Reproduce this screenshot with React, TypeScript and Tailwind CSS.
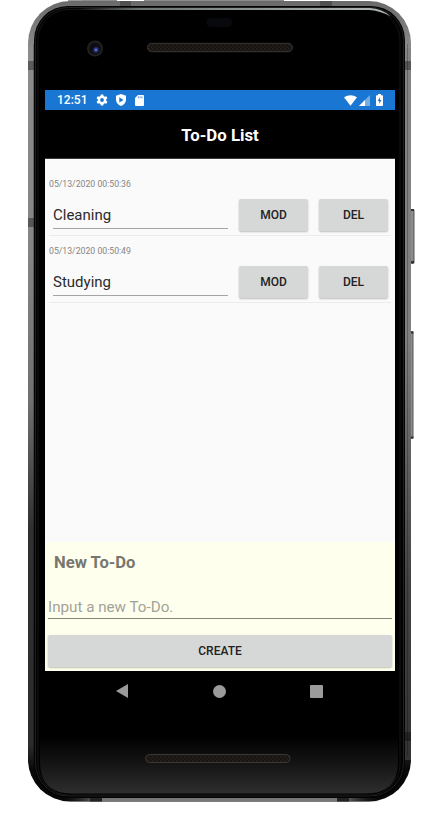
import React from "react";

const todos = [
  { date: "05/13/2020 00:50:36", text: "Cleaning" },
  { date: "05/13/2020 00:50:49", text: "Studying" },
];

/* The handset itself: metal rim, glass, camera, speakers and side keys. */
function Handset() {
  return (
    <svg className="absolute inset-0" width="443" height="820" viewBox="0 0 443 820">
      <defs>
        <linearGradient id="rim" x1="0" y1="0" x2="0" y2="1">
          <stop offset="0" stopColor="#6a6a6a" />
          <stop offset="0.06" stopColor="#8c8c8c" />
          <stop offset="0.3" stopColor="#858585" />
          <stop offset="0.5" stopColor="#707070" />
          <stop offset="0.66" stopColor="#303030" />
          <stop offset="0.93" stopColor="#2c2c2c" />
          <stop offset="0.96" stopColor="#080808" />
        </linearGradient>
        <linearGradient id="rimRight" x1="0" y1="0" x2="0" y2="1">
          <stop offset="0" stopColor="#858585" />
          <stop offset="0.4" stopColor="#808080" />
          <stop offset="0.75" stopColor="#444" />
          <stop offset="1" stopColor="#333" />
        </linearGradient>
        <linearGradient id="foot" x1="0" y1="0" x2="0" y2="1">
          <stop offset="0" stopColor="#000" />
          <stop offset="0.5" stopColor="#151515" />
          <stop offset="1" stopColor="#2e2e2e" />
        </linearGradient>
        <linearGradient id="edge" x1="0" y1="0" x2="1" y2="0">
          <stop offset="0" stopColor="#111" stopOpacity="0" />
          <stop offset="0.12" stopColor="#777" />
          <stop offset="0.88" stopColor="#777" />
          <stop offset="1" stopColor="#111" stopOpacity="0" />
        </linearGradient>
        <linearGradient id="gleam" x1="0" y1="0" x2="1" y2="0">
          <stop offset="0" stopColor="#7d8682" stopOpacity="0" />
          <stop offset="0.2" stopColor="#6f7774" />
          <stop offset="1" stopColor="#b5bab8" />
        </linearGradient>
        <radialGradient id="lens" cx="0.58" cy="0.6" r="0.5">
          <stop offset="0" stopColor="#a9b8ff" />
          <stop offset="0.25" stopColor="#35459c" />
          <stop offset="0.7" stopColor="#131a3a" />
          <stop offset="1" stopColor="#07080c" />
        </radialGradient>
        <pattern id="mesh" width="4" height="4" patternUnits="userSpaceOnUse">
          <rect width="4" height="4" fill="#171411" />
          <circle cx="1" cy="1" r="0.9" fill="#28231f" />
          <circle cx="3" cy="3" r="0.9" fill="#24201c" />
        </pattern>
      </defs>

      <rect x="410.500" y="209.500" width="3.500" height="54" rx="1" fill="#8c8c8c" stroke="#555" />
      <path d="M411 210h3M411 262h3" stroke="#333" strokeWidth="2" />
      <rect x="410.500" y="331.500" width="2.500" height="107" rx="1" fill="#8c8c8c" stroke="#555" />
      <path d="M411 332.500h2.500M411 437.500h2.500" stroke="#333" strokeWidth="2" />

      <rect x="28" y="1" width="383" height="800.500" rx="42" fill="url(#rim)" />
      <rect x="68" y="0" width="14" height="1" fill="#999" />
      <path d="M82 0.500h35M144 0.500h140" stroke="#8a8a8a" />
      <path d="M405 48h6V760h-6z" fill="url(#rimRight)" />
      <path d="M33.500 44V756M407.500 44V756" stroke="#000" strokeOpacity="0.250" />
      <path d="M28 61h6v9h-6zM405 61h6v9h-6zM28 218h6v9h-6zM405 732h6v9h-6z" fill="#000" fillOpacity="0.350" />
      <path d="M120 1h11v5h-11zM320 1h12v5h-12z" fill="#000" fillOpacity="0.250" />
      <rect x="60" y="798" width="321" height="3.500" fill="url(#edge)" />
      <path d="M90 798h12v3.500H90zM337 798h12v3.500h-12z" fill="#222" />

      <rect x="34" y="6" width="371" height="792" rx="34" fill="#030303" />
      <rect x="35.500" y="7.500" width="368" height="788.500" rx="33" fill="none" stroke="#1f1f1f" />
      <rect x="38" y="9.500" width="362" height="785.500" rx="31" fill="#000" stroke="#151515" />
      <path d="M40 736H398V762Q398 793.500 366 793.500H72Q40 793.500 40 762z" fill="url(#foot)" />
      <path d="M78 8H370Q382 8.500 391 16.500Q380 10.500 369 10H78z" fill="url(#gleam)" />

      <circle cx="95" cy="48.500" r="8" fill="#222224" />
      <circle cx="95" cy="48.500" r="6.200" fill="#111114" />
      <circle cx="95.300" cy="49" r="4.300" fill="url(#lens)" />
      <rect x="206.500" y="18" width="25.500" height="9" rx="4.500" fill="#08090d" />
      <rect x="147.500" y="43.300" width="145" height="8.400" rx="4.200" fill="url(#mesh)" stroke="#3a3633" />
      <rect x="145.500" y="754.500" width="144.500" height="8" rx="4" fill="url(#mesh)" stroke="#3a3830" />
    </svg>
  );
}

function StatusBar() {
  return (
    <div className="flex h-5 items-center bg-[#1976d2] px-3 text-white">
      <span className="w-[39px] text-[12px] font-medium leading-5">12:51</span>
      <svg width="12" height="12" viewBox="0 0 12 12">
        <g fill="white">
          <circle cx="6" cy="6" r="4.200" />
          <path d="M4.800.400h2.400l.5 2.400H4.300zM4.800 11.600h2.400l.5-2.400H4.300z" />
          <path d="M4.800.400h2.400l.5 2.400H4.300zM4.800 11.600h2.400l.5-2.400H4.300z" transform="rotate(60 6 6)" />
          <path d="M4.800.400h2.400l.5 2.400H4.300zM4.800 11.600h2.400l.5-2.400H4.300z" transform="rotate(120 6 6)" />
        </g>
        <circle cx="6" cy="6" r="1.900" fill="#1976d2" />
      </svg>
      <svg width="10" height="12" viewBox="0 0 10 12" className="ml-2">
        <path d="M5 0 10 1.700V5.500C10 8.500 8 11 5 12 2 11 0 8.500 0 5.500V1.700z" fill="white" />
        <path d="M3.300 3.300 7.500 5.900 3.300 8.500z" fill="#1976d2" />
      </svg>
      <svg width="9" height="11" viewBox="0 0 9 11" className="ml-[9px]">
        <path d="M3 0H8a1 1 0 0 1 1 1V10a1 1 0 0 1-1 1H1a1 1 0 0 1-1-1V3z" fill="white" />
        <path d="M3.300 1.300v2M5.100 1.300v2M6.900 1.300v2" stroke="#1976d2" strokeWidth="0.700" />
      </svg>
      <svg width="13" height="11" viewBox="0 0 13 11" className="ml-auto">
        <path d="M0 2.300Q6.500-1.800 13 2.300L6.500 10.700z" fill="white" />
      </svg>
      <svg width="11" height="11" viewBox="0 0 11 11" className="ml-0.5">
        <path d="M0 11 11 0V11z" fill="#75aee4" />
        <path d="M0 11 6 5V11z" fill="white" />
      </svg>
      <svg width="7" height="12" viewBox="0 0 7 12" className="ml-1.5">
        <path d="M2 0H5V1.200H6.200Q7 1.200 7 2V11.200Q7 12 6.200 12H.8Q0 12 0 11.200V2Q0 1.200.8 1.200H2z" fill="white" />
        <path d="M4 3.200 1.700 7H3.200V9.800L5.500 6H4z" fill="#1976d2" />
      </svg>
    </div>
  );
}

function Button({ className, children }: { className: string; children: React.ReactNode }) {
  return (
    <button
      className={`flex h-8 items-center justify-center rounded-[2px] bg-[#d6d8d7] text-[12px] font-medium leading-none text-[#222] shadow-[0_1px_2px_rgba(0,0,0,0.25)] ${className}`}
    >
      {children}
    </button>
  );
}

function TodoRow({ date, text }: { date: string; text: string }) {
  return (
    <li className="flex h-[67px] flex-col gap-2 border-b border-[#ececec] pt-[9px]">
      <time className="text-[8.700px] leading-[13px] text-[#858585]">{date}</time>
      <div className="flex gap-[11px] pl-1">
        <div className="h-[30px] w-[175px] border-b border-[#a5a5a5] text-[15px] leading-[33px] text-[#2b2b2b]">
          {text}
        </div>
        <Button className="w-[69px]">MOD</Button>
        <Button className="w-[69px]">DEL</Button>
      </div>
    </li>
  );
}

export default function App() {
  return (
    <div className="relative h-[820px] w-[443px] overflow-hidden bg-white font-[Roboto,'Liberation_Sans',sans-serif]">
      <Handset />
      <div className="relative flex h-full flex-col pl-[45px] pt-[90px]">
        <main className="flex h-[581px] w-[350px] flex-col">
          <StatusBar />
          <h1 className="h-[49px] border-b border-[#3a3a3a] bg-black text-center text-[16.800px] font-bold leading-[51px] text-white">
            To-Do List
          </h1>
          <ul className="grow bg-[#fafafa] px-1 pt-[10px]">
            {todos.map((t) => (
              <TodoRow key={t.text} {...t} />
            ))}
          </ul>
          <section className="flex h-[129px] flex-col bg-[#ffffee] px-[3px]">
            <h2 className="pl-1.5 text-[16.600px] font-bold leading-[41px] text-[#777770]">New To-Do</h2>
            <div className="mt-3 h-6 border-b border-[#85857d] text-[15.200px] leading-[24px] text-[#a2a298]">
              Input a new To-Do.
            </div>
            <Button className="mt-4 w-full">CREATE</Button>
          </section>
        </main>
        <nav className="flex h-10 w-[350px] items-center justify-between pl-[71px] pr-[72px] text-[#9b9b9b]">
          <svg width="12" height="14" viewBox="0 0 12 14" fill="currentColor">
            <path d="M0 7 12 0V14z" />
          </svg>
          <span className="size-[13px] rounded-full bg-current" />
          <span className="size-[13px] rounded-[1px] bg-current" />
        </nav>
      </div>
    </div>
  );
}
